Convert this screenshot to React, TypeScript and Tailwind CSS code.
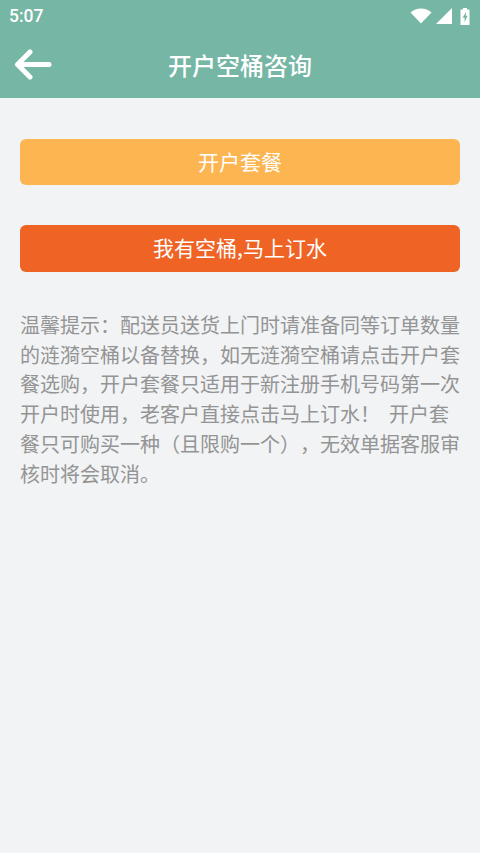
export default function App() {
  return (
    <main
      className="flex h-[853px] w-[480px] flex-col overflow-hidden bg-[#f1f3f5]"
      style={{ fontFamily: '"Noto Sans CJK SC", "Noto Sans", sans-serif' }}
    >
      {/* Header */}
      <header className="h-[98px] shrink-0 bg-[#75b6a4] text-white">
        <div className="flex h-8 items-center justify-between pl-[9px] pr-[10px]">
          <span className="pt-[1px] text-[17.5px] font-medium leading-none font-['Roboto']">5:07</span>
          <div className="flex items-center gap-[4px]">
            <svg width="22" height="16" viewBox="0 0 22 16" fill="white">
              <path d="M0.5 4.5C3.5 1.8 7 0.5 11 0.5s7.5 1.3 10.500 4L11 15.500z" />
            </svg>
            <svg width="16" height="16" viewBox="0 0 16 16" fill="white">
              <path d="M16 0v16H0z" />
            </svg>
            <svg width="10" height="17" viewBox="0 0 10 17" className="ml-[4px]">
              <path
                fill="white"
                fillRule="evenodd"
                d="M3 0h4v1.500h2.500V17H0.500V1.500H3zM6.300 3.500 2.600 9.800h2v4.200l3-6.200H5.600z"
              />
            </svg>
          </div>
        </div>
        <div className="flex h-[66px] items-center pl-[14px]">
          <svg width="38" height="32" viewBox="0 0 38 32" fill="none" stroke="white" strokeWidth="5" strokeLinecap="round" strokeLinejoin="round">
            <path d="M35 15.500H4M16 3 3.500 15.500 16 28" />
          </svg>
          <h1 className="ml-[116px] text-[24px] leading-none font-medium">开户空桶咨询</h1>
        </div>
      </header>

      {/* Actions */}
      <section className="flex flex-col gap-10 px-5 pt-[41px]">
        <button className="h-[46px] rounded-[6px] bg-[#fdb551] text-[21px] text-white">开户套餐</button>
        <button className="h-[47px] rounded-[6px] bg-[#ef6325] pb-[2px] text-[21px] leading-none text-white">我有空桶,马上订水</button>
      </section>

      {/* Tip */}
      <p className="mt-[38px] px-5 text-[20px] leading-[29.7px] text-[#949494] [text-spacing-trim:space-all]">
        温馨提示：配送员送货上门时请准备同等订单数量的涟漪空桶以备替换，如无涟漪空桶请点击开户套餐选购，开户套餐只适用于新注册手机号码第一次开户时使用，老客户直接点击马上订水！&nbsp;&nbsp;开户套餐只可购买一种（且限购一个），无效单据客服审核时将会取消。
      </p>
    </main>
  );
}
